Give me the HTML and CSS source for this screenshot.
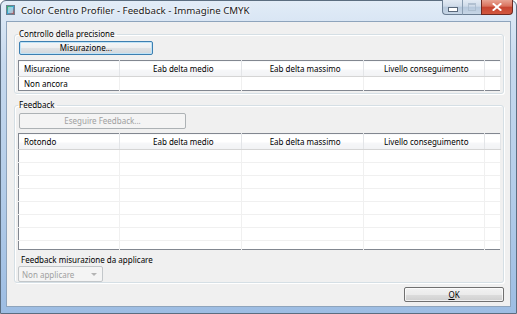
FILE: index.html
```html
<!DOCTYPE html>
<html lang="it">
<head>
    <meta charset="UTF-8">
    <title>Color Centro Profiler - Feedback - Immagine CMYK</title>
    <link rel="stylesheet" href="styles.css">
</head>
<body>
    <div class="window">
        <div class="titlebar">
            <span class="app-icon">
                <svg width="9" height="10" viewBox="0 0 9 10">
                    <defs>
                        <linearGradient id="ic" x1="0" y1="0" x2="1" y2="1">
                            <stop offset="0" stop-color="#3fb24a"/>
                            <stop offset="0.5" stop-color="#35a6d8"/>
                            <stop offset="1" stop-color="#d8483a"/>
                        </linearGradient>
                    </defs>
                    <rect x="0.5" y="0.5" width="8" height="9" fill="url(#ic)" stroke="#6f7f8f"/>
                    <rect x="2" y="2" width="5" height="6" fill="#e9f2f7" opacity="0.55"/>
                </svg>
            </span>
            <span class="title">Color Centro Profiler - Feedback - Immagine CMYK</span>
            <div class="caption-buttons">
                <span class="cap cap-min"><i></i></span>
                <span class="cap cap-max"><i></i></span>
                <span class="cap cap-close">
                    <svg width="10" height="8" viewBox="0 0 10 8">
                        <path d="M1.5 1 L8.5 7 M8.5 1 L1.5 7" stroke="#ffffff" stroke-width="2" stroke-linecap="square"/>
                    </svg>
                </span>
            </div>
        </div>

        <div class="client">
            <fieldset class="group">
                <legend>Controllo della precisione</legend>
                <button class="btn btn-focus">Misurazione...</button>
                <table class="grid">
                    <tr>
                        <th class="col-name">Misurazione</th>
                        <th class="col-a">Eab delta medio</th>
                        <th class="col-b">Eab delta massimo</th>
                        <th class="col-c">Livello conseguimento</th>
                        <th class="col-pad"></th>
                    </tr>
                    <tr>
                        <td>Non ancora</td>
                        <td></td>
                        <td></td>
                        <td></td>
                        <td></td>
                    </tr>
                </table>
            </fieldset>

            <fieldset class="group group-feedback">
                <legend>Feedback</legend>
                <button class="btn btn-wide" disabled>Eseguire Feedback...</button>
                <table class="grid grid-tall">
                    <tr>
                        <th class="col-name">Rotondo</th>
                        <th class="col-a">Eab delta medio</th>
                        <th class="col-b">Eab delta massimo</th>
                        <th class="col-c">Livello conseguimento</th>
                        <th class="col-pad"></th>
                    </tr>
                    <tr><td></td><td></td><td></td><td></td><td></td></tr>
                    <tr><td></td><td></td><td></td><td></td><td></td></tr>
                    <tr><td></td><td></td><td></td><td></td><td></td></tr>
                    <tr><td></td><td></td><td></td><td></td><td></td></tr>
                    <tr><td></td><td></td><td></td><td></td><td></td></tr>
                    <tr><td></td><td></td><td></td><td></td><td></td></tr>
                    <tr><td></td><td></td><td></td><td></td><td></td></tr>
                    <tr class="last"><td></td><td></td><td></td><td></td><td></td></tr>
                </table>
                <div class="field-label">Feedback misurazione da applicare</div>
                <div class="combo">
                    <span>Non applicare</span>
                    <span class="combo-arrow"></span>
                </div>
            </fieldset>

            <div class="footer">
                <button class="btn btn-ok"><u>O</u>K</button>
            </div>
        </div>
    </div>
</body>
</html>
```

FILE: styles.css
```css
html, body {
    margin: 0;
    padding: 0;
    width: 517px;
    height: 314px;
    overflow: hidden;
}

body {
    font-family: 'Noto Sans', 'Open Sans', sans-serif;
    font-size: 8px;
    color: #000000;
    background: #ffffff;
}

.window {
    box-sizing: border-box;
    width: 517px;
    height: 314px;
    border: 1px solid #5b6d80;
    border-radius: 6px 6px 0 0;
    background: linear-gradient(to bottom, #e2ecf7 0%, #c6d9ee 20%, #b4cde9 60%, #9dbde3 100%);
    display: flex;
    flex-direction: column;
}

/* title bar */

.titlebar {
    height: 19px;
    display: flex;
    align-items: center;
    padding-left: 5px;
}

.app-icon {
    width: 9px;
    height: 10px;
    display: flex;
    margin-right: 6px;
    margin-top: -1px;
}

.title {
    font-size: 9.7px;
    color: #1a1a1a;
    text-shadow: 0 0 4px #ffffff, 0 0 2px #ffffff;
    margin-top: -1px;
}

.caption-buttons {
    margin-left: auto;
    margin-right: 3px;
    align-self: flex-start;
    display: flex;
    margin-top: -1px;
}

.cap {
    box-sizing: border-box;
    height: 15px;
    display: flex;
    align-items: center;
    justify-content: center;
    border: 1px solid #6b7e93;
    border-top: none;
}

.cap-min {
    width: 20px;
    border-radius: 0 0 0 4px;
    border-right: none;
    background: linear-gradient(to bottom, #e3ebf4 0%, #cfdbe9 45%, #b6c8dc 50%, #c7d6e6 100%);
}

.cap-max {
    width: 19px;
    border-right: none;
    border-left: 1px solid #8a9db1;
    background: linear-gradient(to bottom, #e3ebf4 0%, #cfdbe9 45%, #b6c8dc 50%, #c7d6e6 100%);
}

.cap-close {
    width: 32px;
    border-radius: 0 0 4px 0;
    border-color: #6e2a22;
    background: linear-gradient(to bottom, #e8a493 0%, #d9715c 45%, #c64430 50%, #d2573f 100%);
}

.cap-min i {
    display: block;
    width: 8px;
    height: 3px;
    margin-top: 5px;
    background: #ffffff;
    border: 1px solid #59687a;
}

.cap-max i {
    display: block;
    width: 6px;
    height: 5px;
    border: 1px solid #a9b9ca;
    border-top-width: 2px;
    opacity: 0.8;
}

/* client area */

.client {
    flex: 1;
    margin: 1px 5px 6px 5px;
    border: 1px solid #8ea4bc;
    background: #f0f0f0;
    display: flex;
    flex-direction: column;
    padding: 6px 6px 0 7px;
}

.group {
    margin: 0;
    padding: 1px 3px 2px 4px;
    border: 1px solid #d5dfe5;
    border-radius: 3px;
    box-shadow: inset 1px 1px 0 #ffffff, 1px 1px 0 #ffffff;
    min-width: 0;
}

.group legend {
    padding: 0 2px 0 1px;
    margin-left: -1px;
    line-height: 12px;
}

.group-feedback {
    margin-top: 5px;
    padding-bottom: 0;
}

/* buttons */

.btn {
    display: block;
    box-sizing: border-box;
    height: 14px;
    padding: 0;
    font-family: inherit;
    font-size: 8px;
    line-height: 12px;
    color: #000000;
    border: 1px solid #707070;
    border-radius: 2px;
    background: linear-gradient(to bottom, #f2f2f2 0%, #ebebeb 50%, #dddddd 51%, #cfcfcf 100%);
    box-shadow: inset 0 0 0 1px rgba(255, 255, 255, 0.7);
}

.btn-focus {
    width: 134px;
    border-color: #3c7fb1;
    background: linear-gradient(to bottom, #f4f6f8 0%, #eceef0 50%, #dfe2e5 51%, #d3d7db 100%);
    box-shadow: inset 0 0 0 1px #bfe3f7;
}

.btn-wide {
    width: 167px;
    height: 16px;
    margin-top: 1px;
    color: #a0a0a0;
    border-color: #adb2b5;
    background: #f4f4f4;
    box-shadow: none;
}

.btn-ok {
    width: 100px;
    height: 15px;
    margin-left: auto;
}

.btn-ok u {
    text-decoration-thickness: 1px;
    text-underline-offset: 1px;
}

/* list views */

.grid {
    width: 483px;
    margin-top: 5px;
    margin-left: -1px;
    border-collapse: collapse;
    border: 1px solid #828790;
    background: #ffffff;
    table-layout: fixed;
}

.grid th {
    height: 15px;
    padding: 0 0 0 5px;
    font-weight: normal;
    text-align: center;
    background: linear-gradient(to bottom, #ffffff 0%, #ffffff 50%, #f7f8fa 51%, #f1f2f4 100%);
    border-right: 1px solid #e3e5e8;
    border-bottom: 1px solid #d5d5d5;
}

.grid th.col-name {
    text-align: left;
}

.grid td {
    height: 13px;
    padding: 0 0 0 5px;
    border-right: 1px solid #f0f0f0;
}

.col-name { width: 95px; }
.col-a { width: 116px; }
.col-b { width: 115px; }
.col-c { width: 115px; }
.col-pad { width: 10px; }

.grid-tall {
    margin-top: 4px;
}

.grid-tall td {
    height: 12px;
    border-bottom: 1px solid #f0f0f0;
}

.grid-tall tr.last td {
    height: 8px;
    border-bottom: none;
}

.field-label {
    margin-top: 4px;
    margin-left: 2px;
    line-height: 12px;
}

.combo {
    box-sizing: border-box;
    width: 85px;
    height: 16px;
    margin-left: -1px;
    display: flex;
    align-items: center;
    padding-left: 3px;
    color: #a0a0a0;
    border: 1px solid #c3c7ca;
    border-radius: 2px;
    background: #f4f4f4;
}

.combo-arrow {
    margin-left: auto;
    margin-right: 5px;
    width: 0;
    height: 0;
    border-left: 3px solid transparent;
    border-right: 3px solid transparent;
    border-top: 3px solid #b4b4b4;
}

.footer {
    display: flex;
    padding-top: 4px;
    padding-right: 0;
}
```
